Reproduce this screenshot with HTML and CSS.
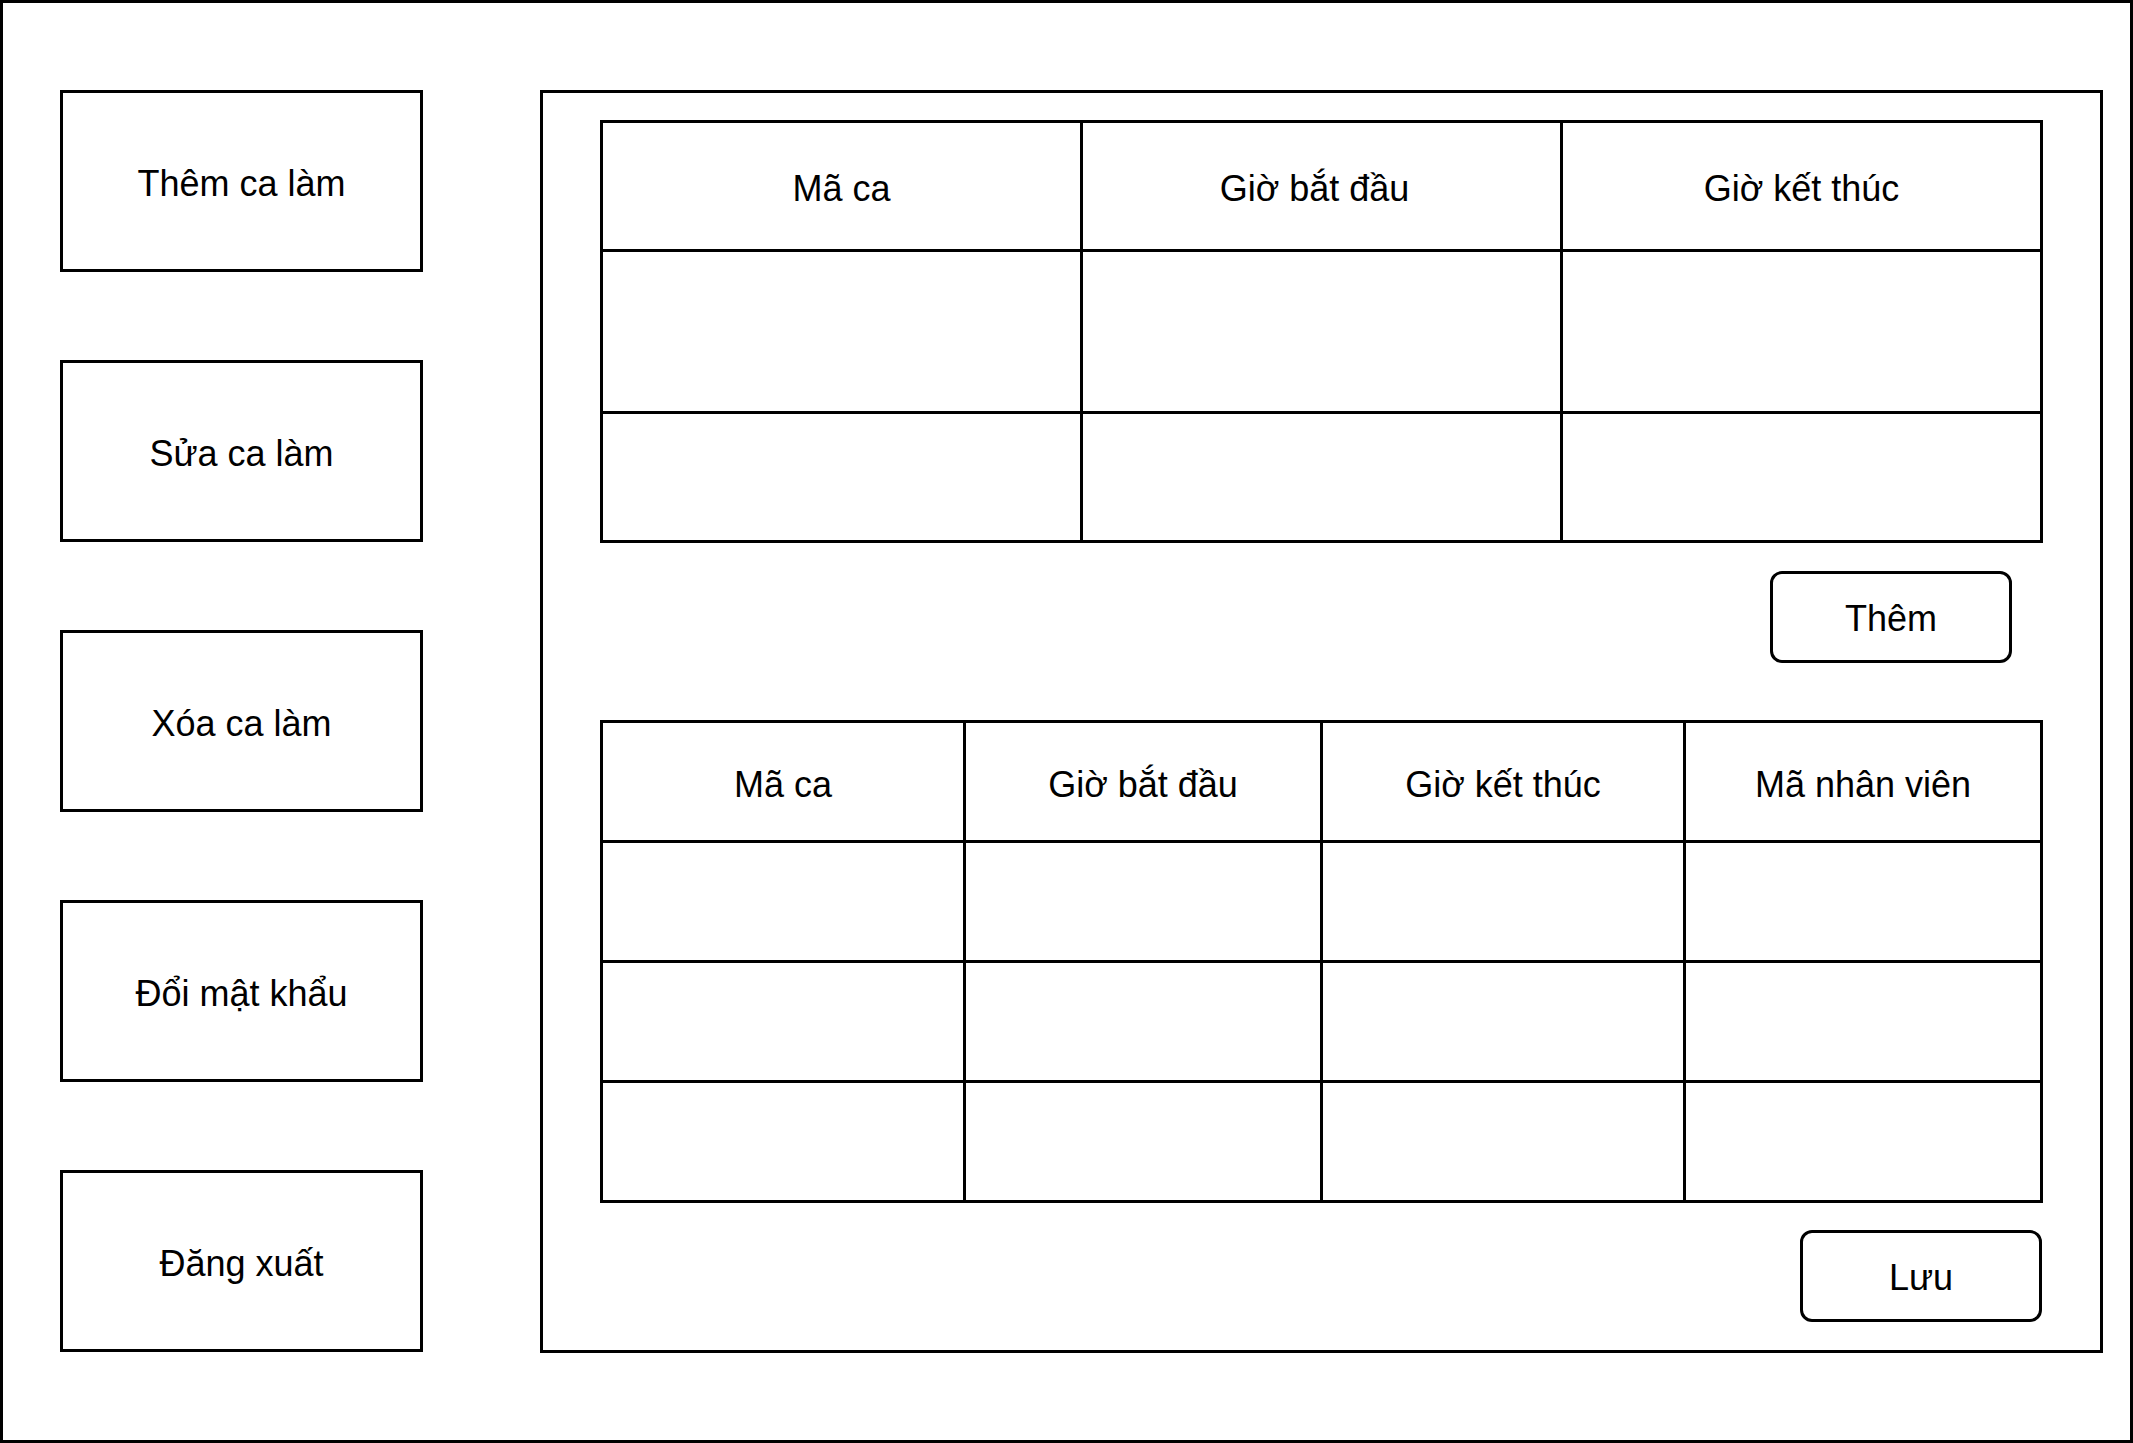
FILE: index.html
```html
<!DOCTYPE html>
<html lang="vi">
<head>
<meta charset="utf-8">
<title>Ca làm</title>
<link rel="stylesheet" href="styles.css">
</head>
<body>
<div class="frame">
  <nav class="sidebar">
    <div class="side-btn">Thêm ca làm</div>
    <div class="side-btn">Sửa ca làm</div>
    <div class="side-btn">Xóa ca làm</div>
    <div class="side-btn">Đổi mật khẩu</div>
    <div class="side-btn">Đăng xuất</div>
  </nav>
  <main class="panel">
    <div class="grid grid-3">
      <div class="cell head">Mã ca</div>
      <div class="cell head head-shift">Giờ bắt đầu</div>
      <div class="cell head">Giờ kết thúc</div>
      <div class="cell"></div><div class="cell"></div><div class="cell"></div>
      <div class="cell"></div><div class="cell"></div><div class="cell"></div>
    </div>
    <div class="btn-row btn-row-add">
      <div class="round-btn add-btn">Thêm</div>
    </div>
    <div class="grid grid-4">
      <div class="cell head">Mã ca</div>
      <div class="cell head">Giờ bắt đầu</div>
      <div class="cell head">Giờ kết thúc</div>
      <div class="cell head">Mã nhân viên</div>
      <div class="cell"></div><div class="cell"></div><div class="cell"></div><div class="cell"></div>
      <div class="cell"></div><div class="cell"></div><div class="cell"></div><div class="cell"></div>
      <div class="cell"></div><div class="cell"></div><div class="cell"></div><div class="cell"></div>
    </div>
    <div class="btn-row btn-row-save">
      <div class="round-btn save-btn">Lưu</div>
    </div>
  </main>
</div>
</body>
</html>
```

FILE: styles.css
```css
* { box-sizing: border-box; }
html, body { margin: 0; padding: 0; background: #fff; }
body {
  font-family: "Liberation Sans", Arial, sans-serif;
  font-size: 36px;
  color: #000;
}
.frame {
  width: 2133px;
  height: 1443px;
  border: 3px solid #000;
  display: flex;
  align-items: flex-start;
  padding: 87px 0 0 57px;
}
.sidebar {
  width: 363px;
  display: flex;
  flex-direction: column;
  gap: 88px;
}
.side-btn {
  height: 182px;
  border: 3px solid #000;
  display: flex;
  align-items: center;
  justify-content: center;
  padding-top: 6px;
}
.panel {
  margin-left: 117px;
  width: 1563px;
  height: 1263px;
  border: 3px solid #000;
  padding: 27px 57px 0 57px;
  display: flex;
  flex-direction: column;
}
.grid {
  display: grid;
  gap: 3px;
  padding: 3px;
  background: #000;
  width: 1443px;
}
.grid-3 {
  grid-template-columns: repeat(3, 477px);
  grid-template-rows: 126px 159px 126px;
}
.grid-4 {
  grid-template-columns: 360px 354px 360px 354px;
  grid-template-rows: repeat(4, 117px);
}
.cell {
  background: #fff;
  display: flex;
  align-items: center;
  justify-content: center;
}
.head { padding-top: 6px; }
.head-shift { padding-right: 14px; }
.btn-row {
  display: flex;
  justify-content: flex-end;
}
.btn-row-add { margin: 28px 31px 57px 0; }
.btn-row-save { margin: 27px 1px 0 0; }
.round-btn {
  width: 242px;
  height: 92px;
  border: 3px solid #000;
  border-radius: 12px;
  display: flex;
  align-items: center;
  justify-content: center;
  padding-top: 4px;
}
```
